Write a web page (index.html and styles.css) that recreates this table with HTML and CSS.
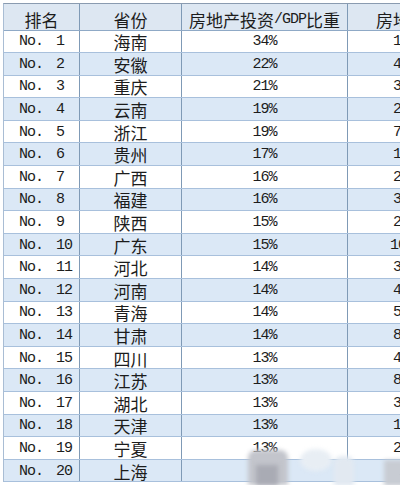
FILE: index.html
```html
<!DOCTYPE html>
<html lang="zh">
<head>
<meta charset="utf-8">
<link rel="stylesheet" href="styles.css">
</head>
<body>
<div class="sheet">
  <div class="row head">
    <div class="cell hc cjk">排名</div>
    <div class="cell cjk">省份</div>
    <div class="cell cjk">房地产投资<span class="lat">/GDP</span>比重</div>
    <div class="cell h4 cjk">房地产开发</div>
  </div>
  <div class="row"><div class="cell c1"><span class="no">No.</span><span class="num">1</span></div><div class="cell cjk">海南</div><div class="cell pct">34%</div><div class="cell val">1234</div></div>
  <div class="row alt"><div class="cell c1"><span class="no">No.</span><span class="num">2</span></div><div class="cell cjk">安徽</div><div class="cell pct">22%</div><div class="cell val">4567</div></div>
  <div class="row"><div class="cell c1"><span class="no">No.</span><span class="num">3</span></div><div class="cell cjk">重庆</div><div class="cell pct">21%</div><div class="cell val">3456</div></div>
  <div class="row alt"><div class="cell c1"><span class="no">No.</span><span class="num">4</span></div><div class="cell cjk">云南</div><div class="cell pct">19%</div><div class="cell val">2345</div></div>
  <div class="row"><div class="cell c1"><span class="no">No.</span><span class="num">5</span></div><div class="cell cjk">浙江</div><div class="cell pct">19%</div><div class="cell val">7654</div></div>
  <div class="row alt"><div class="cell c1"><span class="no">No.</span><span class="num">6</span></div><div class="cell cjk">贵州</div><div class="cell pct">17%</div><div class="cell val">1987</div></div>
  <div class="row"><div class="cell c1"><span class="no">No.</span><span class="num">7</span></div><div class="cell cjk">广西</div><div class="cell pct">16%</div><div class="cell val">2345</div></div>
  <div class="row alt"><div class="cell c1"><span class="no">No.</span><span class="num">8</span></div><div class="cell cjk">福建</div><div class="cell pct">16%</div><div class="cell val">3456</div></div>
  <div class="row"><div class="cell c1"><span class="no">No.</span><span class="num">9</span></div><div class="cell cjk">陕西</div><div class="cell pct">15%</div><div class="cell val">2456</div></div>
  <div class="row alt"><div class="cell c1"><span class="no">No.</span><span class="num">10</span></div><div class="cell cjk">广东</div><div class="cell pct">15%</div><div class="cell val wide">10234</div></div>
  <div class="row"><div class="cell c1"><span class="no">No.</span><span class="num">11</span></div><div class="cell cjk">河北</div><div class="cell pct">14%</div><div class="cell val">3456</div></div>
  <div class="row alt"><div class="cell c1"><span class="no">No.</span><span class="num">12</span></div><div class="cell cjk">河南</div><div class="cell pct">14%</div><div class="cell val">4567</div></div>
  <div class="row"><div class="cell c1"><span class="no">No.</span><span class="num">13</span></div><div class="cell cjk">青海</div><div class="cell pct">14%</div><div class="cell val">5678</div></div>
  <div class="row alt"><div class="cell c1"><span class="no">No.</span><span class="num">14</span></div><div class="cell cjk">甘肃</div><div class="cell pct">14%</div><div class="cell val">8765</div></div>
  <div class="row"><div class="cell c1"><span class="no">No.</span><span class="num">15</span></div><div class="cell cjk">四川</div><div class="cell pct">13%</div><div class="cell val">4567</div></div>
  <div class="row alt"><div class="cell c1"><span class="no">No.</span><span class="num">16</span></div><div class="cell cjk">江苏</div><div class="cell pct">13%</div><div class="cell val">8765</div></div>
  <div class="row"><div class="cell c1"><span class="no">No.</span><span class="num">17</span></div><div class="cell cjk">湖北</div><div class="cell pct">13%</div><div class="cell val">3456</div></div>
  <div class="row alt"><div class="cell c1"><span class="no">No.</span><span class="num">18</span></div><div class="cell cjk">天津</div><div class="cell pct">13%</div><div class="cell val">1234</div></div>
  <div class="row"><div class="cell c1"><span class="no">No.</span><span class="num">19</span></div><div class="cell cjk">宁夏</div><div class="cell pct">13%</div><div class="cell val">2345</div></div>
  <div class="row alt"><div class="cell c1"><span class="no">No.</span><span class="num">20</span></div><div class="cell cjk">上海</div><div class="cell pct">12%</div><div class="cell val">1234</div></div>
</div>
<div class="mark">
  <div class="blob b1"></div>
  <div class="blob b2"></div>
  <div class="blob b3"></div>
  <div class="blob b4"></div>
  <div class="blob b5"></div>
</div>
</body>
</html>
```
FILE: styles.css
```css
html, body {
  margin: 0;
  padding: 0;
  background: #ffffff;
  width: 400px;
  height: 485px;
  overflow: hidden;
  position: relative;
}
.sheet {
  margin: 3px 0 0 3px;
  width: 397px;
  overflow: hidden;
  border-top: 1px solid #8a9bb0;
  border-left: 1px solid #a9bdd4;
  color: #1c1c1c;
}
.row {
  display: grid;
  grid-template-columns: 76px 102px 166px 170px;
  height: 22.6px;
  box-sizing: border-box;
  border-bottom: 1px solid #a8c0dc;
  background: #ffffff;
}
.row.alt {
  background: #dbe8f6;
}
.row.head {
  height: 26.5px;
  background: #dde7f2;
  border-bottom: 1px solid #8fa9c6;
}
.cell {
  display: flex;
  align-items: center;
  justify-content: center;
  border-right: 1px solid #7f9ab6;
  box-sizing: border-box;
  white-space: nowrap;
  line-height: 1;
  padding-top: 1px;
}
.head .cell {
  padding-top: 5px;
}
.cjk {
  font-family: "Noto Sans CJK SC", "Noto Sans", sans-serif;
  font-size: 17px;
}
.lat {
  font-family: "Liberation Mono", monospace;
  font-size: 15px;
  letter-spacing: -1px;
}
.c1 {
  justify-content: flex-start;
  padding-left: 15px;
  font-family: "Liberation Mono", monospace;
  font-size: 15px;
  letter-spacing: -1px;
}
.num {
  margin-left: 13px;
}
.pct {
  font-family: "Liberation Mono", monospace;
  font-size: 15px;
  letter-spacing: -1px;
}
.h4 {
  justify-content: flex-start;
  padding-left: 28px;
}
.val {
  justify-content: flex-start;
  padding-left: 45px;
  font-family: "Liberation Mono", monospace;
  font-size: 15px;
  letter-spacing: -1px;
}
.val.wide {
  padding-left: 42px;
}
.mark {
  position: absolute;
  left: 0;
  top: 0;
  width: 400px;
  height: 485px;
  pointer-events: none;
}
.blob {
  position: absolute;
  filter: blur(2px);
}
.b1 {
  left: 248px;
  top: 450px;
  width: 40px;
  height: 35px;
  background: #c3c5cc;
  border-radius: 8px 8px 0 0;
}
.b2 {
  left: 256px;
  top: 465px;
  width: 22px;
  height: 20px;
  background: #a9abb4;
}
.b3 {
  left: 300px;
  top: 449px;
  width: 32px;
  height: 22px;
  background: #e8eef4;
  border-radius: 50%;
}
.b4 {
  left: 334px;
  top: 456px;
  width: 20px;
  height: 30px;
  background: #e2e9f1;
  border-radius: 8px 8px 0 0;
}
.b5 {
  left: 384px;
  top: 460px;
  width: 20px;
  height: 26px;
  background: #c8ccd3;
}
```
